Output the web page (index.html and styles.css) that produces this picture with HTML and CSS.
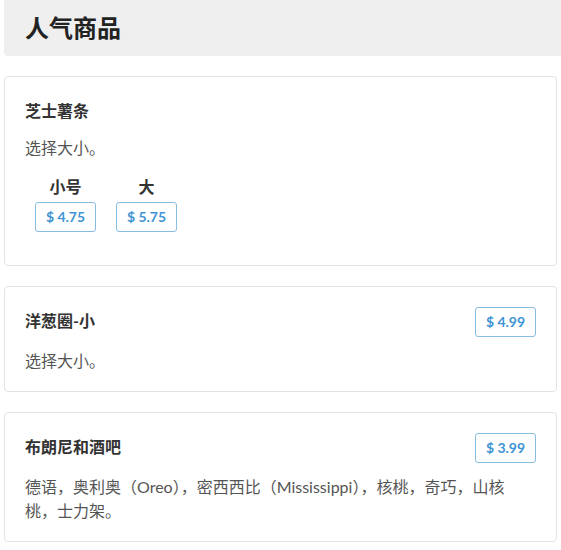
FILE: index.html
```html
<!DOCTYPE html>
<html lang="zh-CN">

<head>
  <meta charset="UTF-8" />
  <meta name="viewport" content="width=device-width, initial-scale=1.0" />
  <title>人气商品</title>
  <link rel="stylesheet" href="styles.css">
</head>

<body>
  <div class="page">
    <h1 class="header">人气商品</h1>

    <div class="card">
      <div class="card-row">
        <h2 class="item-name">芝士薯条</h2>
      </div>
      <p class="item-desc">选择大小。</p>
      <div class="sizes">
        <div class="size">
          <div class="size-label">小号</div>
          <span class="price">$ 4.75</span>
        </div>
        <div class="size">
          <div class="size-label">大</div>
          <span class="price">$ 5.75</span>
        </div>
      </div>
    </div>

    <div class="card">
      <div class="card-row">
        <h2 class="item-name">洋葱圈-小</h2>
        <span class="price">$ 4.99</span>
      </div>
      <p class="item-desc">选择大小。</p>
    </div>

    <div class="card">
      <div class="card-row">
        <h2 class="item-name">布朗尼和酒吧</h2>
        <span class="price">$ 3.99</span>
      </div>
      <p class="item-desc">德语，奥利奥（Oreo），密西西比（Mississippi），核桃，奇巧，山核桃，士力架。</p>
    </div>
  </div>
</body>

</html>
```

FILE: styles.css
```css
body {
  margin: 0;
  font-family: Lato, "Noto Sans CJK SC", sans-serif;
  color: #333;
  background: #fff;
}

.page {
  padding: 0 4px;
  display: flex;
  flex-direction: column;
  gap: 20px;
}

.header {
  margin: 0 -4px 0 0;
  padding: 12px 21px;
  line-height: 32px;
  font-size: 24px;
  font-weight: bold;
  color: #222;
  background: #efefef;
  border-radius: 0 0 0 4px;
}

.card {
  border: 1px solid #e3e3e3;
  border-radius: 4px;
  padding: 20px 20px 18px;
}

.card-row {
  display: flex;
  justify-content: space-between;
  align-items: flex-start;
}

.item-name {
  margin: 0;
  font-size: 16px;
  line-height: 27px;
  font-weight: bold;
  color: #333;
}

.item-desc {
  margin: 12px 0 0;
  font-size: 16px;
  line-height: 24px;
  color: #555;
}

.price {
  display: inline-block;
  box-sizing: border-box;
  width: 61px;
  height: 30px;
  line-height: 28px;
  text-align: center;
  font-size: 14px;
  font-weight: bold;
  color: #3f94d3;
  border: 1px solid #88bde2;
  border-radius: 3px;
}

.sizes {
  display: flex;
  gap: 20px;
  padding: 15px 0 15px 10px;
}

.size {
  display: flex;
  flex-direction: column;
  align-items: center;
  gap: 3px;
}

.size-label {
  font-size: 16px;
  line-height: 24px;
  font-weight: bold;
  color: #333;
}
```
